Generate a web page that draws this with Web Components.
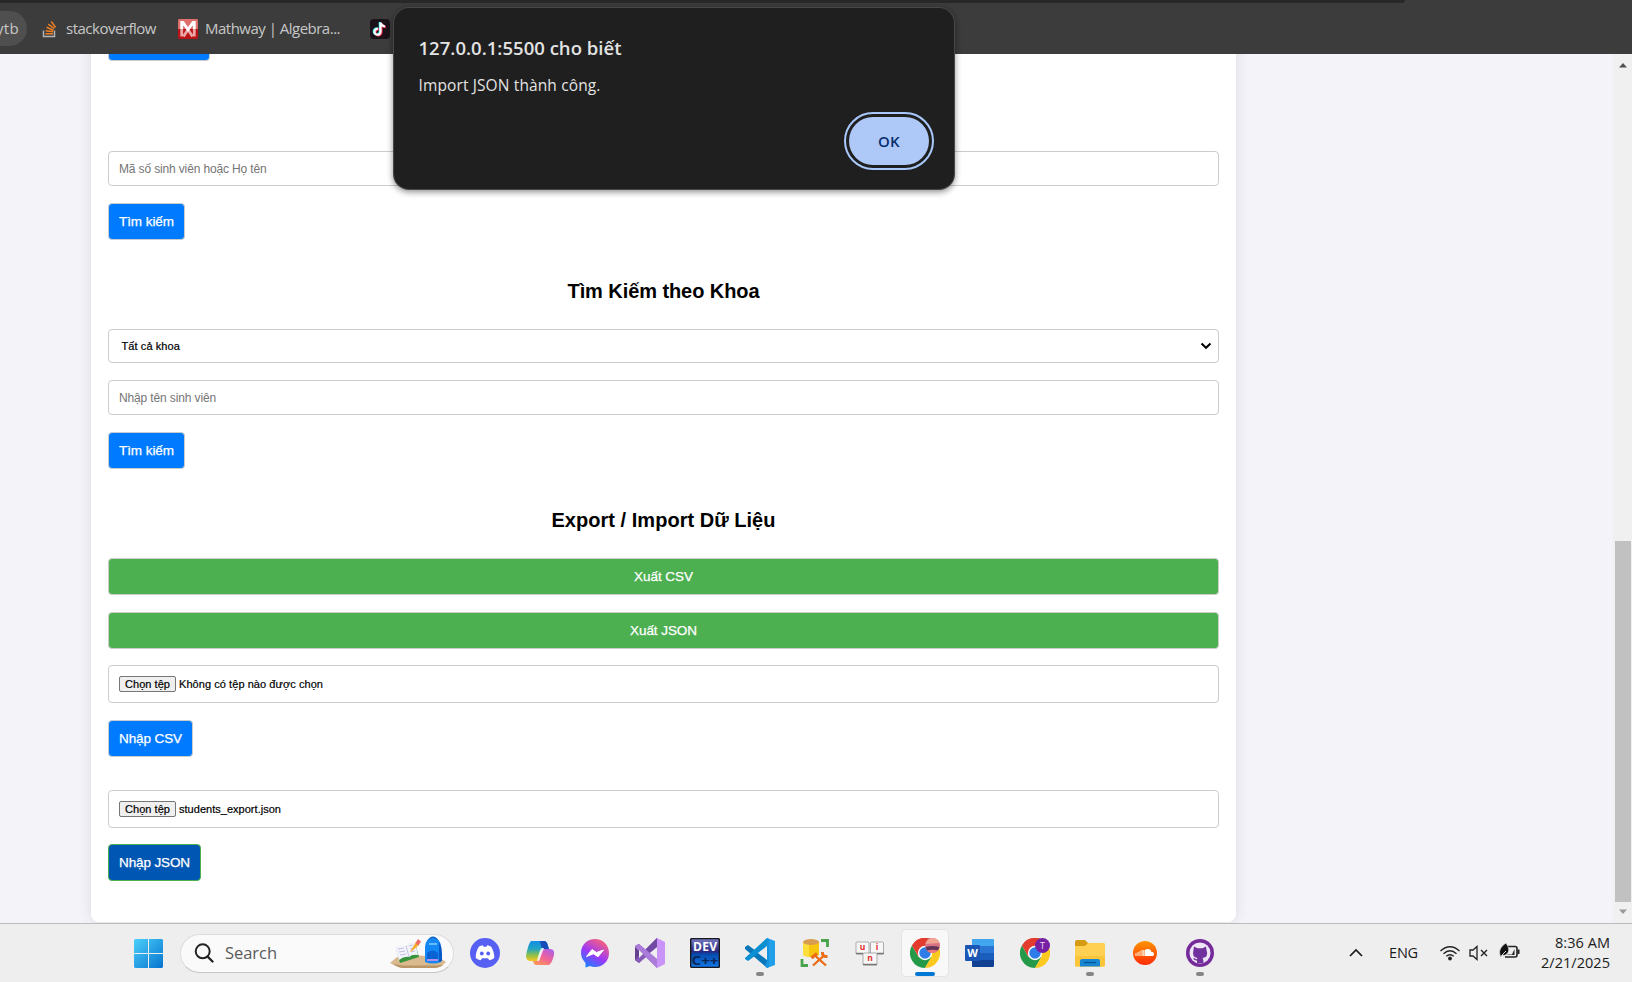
<!DOCTYPE html>
<html lang="vi">
<head>
<meta charset="utf-8">
<title>Quản lý sinh viên</title>
<style>
html,body{margin:0;height:100%;overflow:hidden}
body{font-family:"Liberation Sans",Arial,sans-serif}
</style>
</head>
<body>
<desktop-screen></desktop-screen>
<script>
const define = (name, html, after) => customElements.define(name, class extends HTMLElement {
  connectedCallback() {
    if (this.shadowRoot) return;
    this.attachShadow({mode: 'open'}).innerHTML = typeof html === 'function' ? html(this) : html;
    if (after) after(this);
  }
});

/* Text run whose tracking is adjusted to a given width */
define('fit-text', '<style>:host{display:inline-block;white-space:nowrap;text-align:left}span{display:inline-block}</style><span><slot></slot></span>', el => {
  const span = el.shadowRoot.querySelector('span'), w = +el.getAttribute('w');
  const n = el.textContent.length;
  const natural = span.getBoundingClientRect().width;
  span.style.letterSpacing = ((w - natural) / n) + 'px';
  el.style.width = w + 'px';
});

const chrome = `<path d="M15 15 2 7.5A15 15 0 0 1 28 7.5L15 8Z" fill="#e33b2e"/><path d="M2 7.5A15 15 0 0 0 15 30L21.5 19 15 15 8.5 19Z" fill="#249a49"/><path d="M28 7.5A15 15 0 0 1 15 30L21.5 18.7 15 8Z" fill="#fcc91f"/><path d="M2 7.5 8.5 18.8 15 8H28.2A15 15 0 0 0 2 7.5Z" fill="#e33b2e"/><circle cx="15" cy="15" r="7.2" fill="#fff"/><circle cx="15" cy="15" r="5.7" fill="#2f7de9"/>`;
const icons = {
  stack: ['0 0 16 18', `<path d="M1.5 10.5V16.500H12.500V10.500" fill="none" stroke="#b5b5b5" stroke-width="1.500"/><g stroke="#ee7f24" stroke-width="1.500"><path d="M3.500 13.700H11M3.700 10.700 11 11.800M4.600 7.300 11.500 10.200M6.300 4.200 12.200 8.500M9.300 1.500 13.600 7.500"/></g>`],
  mathway: ['0 0 20 20', `<rect width="20" height="20" rx="1.500" fill="#b91318"/><path d="M1 0H19L20 1V10H0V1Z" fill="#df6f6c"/><path d="M3.700 10V17.500M16.300 10V17.500M5.500 17.500 10 10.500 14.500 17.500" fill="none" stroke="#eba6a3" stroke-width="2.800"/><path d="M3.700 10V3.500H5L10 10.500 15 3.500H16.300V10" fill="none" stroke="#fff" stroke-width="2.800"/>`],
  tiktok: ['0 0 20 20', `<rect width="20" height="20" rx="4" fill="#1b1119"/><g fill="none" stroke-width="2.200"><path d="M10.500 3.500V13A3 3 0 1 1 8 9.800M10.500 4Q11.500 7 15 7.500" stroke="#25f4ee" transform="translate(-.7 -.4)"/><path d="M10.500 3.500V13A3 3 0 1 1 8 9.800M10.500 4Q11.500 7 15 7.500" stroke="#fe2c55" transform="translate(.9 .6)"/><path d="M10.500 3.500V13A3 3 0 1 1 8 9.800M10.500 4Q11.500 7 15 7.500" stroke="#fff"/></g>`],
  windows: ['0 0 29 29', `<defs><linearGradient id="g" x1="0" y1="0" x2="29" y2="29" gradientUnits="userSpaceOnUse"><stop stop-color="#4bd0fb"/><stop offset="1" stop-color="#0673ce"/></linearGradient></defs><path d="M1 0H14V14H0V1ZM15 0H28L29 1V14H15ZM0 15H14V29H1L0 28ZM15 15H29V28L28 29H15Z" fill="url(#g)"/>`],
  search: ['0 0 20 20', `<circle cx="8.700" cy="8.300" r="7" fill="none" stroke="#222" stroke-width="2"/><path d="M13.500 13.500 18.500 18.500" stroke="#222" stroke-width="2.300" stroke-linecap="round"/>`],
  books: ['0 0 58 34', `<path d="M1 27 8 21Q28 17 51 22L57 26Q53 31 46 32H13Q7 31 1 27Z" fill="#dab98f"/><path d="M4 28Q8 31 13 32H46Q52 31 54 29L46 29.500H14Z" fill="#b99568"/><path d="M7 13 26 7 30 21 11 27Z" fill="#38943c"/><path d="M6 11Q12 8 17 10 20 5 26 6L29 19Q23 18 20 21 15 20 10 24Z" fill="#f3f3fb"/><path d="M17 10 20 21M9 13 15 12M10 16 16 15M11 19 17 18M20 10 24 9M21 13 25 12M22 16 26 15" stroke="#b5b1dc" stroke-width=".8" fill="none"/><path d="M21 16 27 6 30 9 23 15Z" fill="#f8aa29"/><path d="M26.500 7 29 3 32 5.500 29.500 9.500Z" fill="#ef6a64"/><path d="M39 5Q44-2 49 5" fill="none" stroke="#1265c5" stroke-width="2"/><path d="M36 11Q36 3 44 2 52 3 52 11V26Q44 29 36 26Z" fill="#1388f4"/><path d="M50 6Q53 10 53 18V25L50 26Z" fill="#075ac5"/><path d="M38 17Q44 12 49 17V25H38Z" fill="#0963d5"/><path d="M38 23H49V25H38Z" fill="#b390f0"/><path d="M40 8H48" stroke="#66bdff" stroke-width="2"/>`],
  discord: ['0 0 30 30', `<circle cx="15" cy="15" r="15" fill="#5661f4"/><path d="M9 8.500Q11 7.500 12.800 7.300L13.600 8.700H16.400L17.200 7.300Q19 7.500 21 8.500 24.500 14 24.300 20 22 21.700 19.300 22.300L18 20.300H12L10.700 22.300Q8 21.700 5.700 20 5.500 14 9 8.500Z" fill="#fff"/><ellipse cx="11.800" cy="15.500" rx="1.900" ry="2.100" fill="#5661f4"/><ellipse cx="18.200" cy="15.500" rx="1.900" ry="2.100" fill="#5661f4"/>`],
  copilot: ['0 0 30 30', `<defs><linearGradient id="a" x2="0" y2="1"><stop stop-color="#118ee6"/><stop offset=".4" stop-color="#24a5c2"/><stop offset=".7" stop-color="#8cc14a"/><stop offset="1" stop-color="#f8c51d"/></linearGradient><linearGradient id="b" x1=".8" x2=".2" y2="1"><stop stop-color="#b05fe5"/><stop offset=".5" stop-color="#ee6299"/><stop offset="1" stop-color="#fb9858"/></linearGradient></defs><path d="M6 3H19Q22 3 23 8L24 11H19Q17 11 16 14L13 23H6Q1 23 1 18 3 6 6 3Z" fill="url(#a)"/><path d="M15 3H19Q22 3 23 8L24 11H18Q16 10 15 3Z" fill="#174bb8"/><path d="M24 11H25Q30 11 29 17 27 25 24 27H11Q9 27 8 23H11Q14 23 15 19L17 13Q18 11 20 11Z" fill="url(#b)"/><path d="M19 10H17Q15 10 12 23H14Z" fill="#fff" opacity=".8"/>`],
  messenger: ['0 0 30 30', `<defs><linearGradient id="m" x1=".2" y1="1" x2=".8" y2="0"><stop stop-color="#1384ff"/><stop offset=".45" stop-color="#9d38f7"/><stop offset="1" stop-color="#ff6671"/></linearGradient></defs><path d="M15 1C7 1 1 7 1 15 1 19 3 22 5.500 25V29.500L10 28Q12 29 15 29C23 29 29 23 29 15S23 1 15 1Z" fill="url(#m)"/><path d="M6.500 18.500 12 11.500 16.500 14.500 23.500 12 18 18.800 13.500 15.800Z" fill="#fff" stroke="#fff" stroke-width="1"/>`],
  vs: ['0 0 30 30', `<path d="M0 8 4 6 12 15 4 25 0 22Z" fill="#64408f"/><path d="M0 8 4 6 23 22 22 30 0 9Z" fill="#ae82dc"/><path d="M0 22 22 0V10L4 25Z" fill="#865bb8"/><path d="M4 11V20L9 15Z" fill="#eee"/><path d="M22 0 30 4V26L22 30V21L15 15 22 9Z" fill="#c993f7"/><path d="M22 9V21L15 15Z" fill="#eee"/><path d="M22 0V9L14 15 11 11Z" fill="#7149a5"/><path d="M0 8 4 6 22 21V30Z" fill="#aa7bd8"/>`],
  dev: ['0 0 30 30', `<defs><linearGradient id="d" x2="0" y2="1"><stop stop-color="#777bc0"/><stop offset=".45" stop-color="#292a82"/><stop offset=".55" stop-color="#064caf"/><stop offset="1" stop-color="#1277e8"/></linearGradient></defs><rect x=".6" y=".6" width="28.800" height="28.800" rx="1.500" fill="url(#d)" stroke="#17171d" stroke-width="1.500"/><text x="3" y="13" font-family="Open Sans" font-weight="700" font-size="12" textLength="24" fill="#fff">DEV</text><text x="1.500" y="26.500" font-family="Open Sans" font-weight="700" font-size="13" textLength="27" lengthAdjust="spacingAndGlyphs" fill="#092657">C++</text>`],
  vscode: ['0 0 30 30', `<path d="M0 9 3 7 23 22V30L21 29 0 11Z" fill="#0877b9"/><path d="M0 20 22 0V9L3 23 0 21Z" fill="#0b8fd3"/><path d="M22 0 30 3V27L22 30V22L13 15 22 8Z" fill="#229fe9"/><path d="M22 8V22L13 15Z" fill="#eee"/><path d="M22 0 24 1V29L22 30 20 28 22 22V8Z" fill="#1794df"/>`],
  db: ['0 0 30 30', `<path d="M3 4V17Q10 21 19 17V4Z" fill="#f7c60e"/><path d="M3 4V17Q6 19 9 19V4Z" fill="#ffdf3c"/><ellipse cx="11" cy="4" rx="8" ry="3" fill="#d89d50"/><path d="M21 2.500H27.500V9M2 21V27.500H8" fill="none" stroke="#49a34c" stroke-width="2.800"/><path d="M15.500 18 26 27.500M23.500 18 13 27.500" fill="none" stroke="#eb6a13" stroke-width="2.300"/><path d="M11.500 20 17 15.500M22.500 14Q22 19 27.500 18.500" fill="none" stroke="#eb6a13" stroke-width="3"/>`],
  unikey: ['0 0 30 30', `<g transform="translate(0 3)"><g fill="#f7f7f7" stroke="#999" stroke-width=".8"><rect x="1" y="1" width="13" height="12" rx="1"/><rect x="15.500" y="1" width="13" height="12" rx="1"/><rect x="8" y="12" width="14" height="12" rx="1"/></g><path d="M1 12.500H8M22 12.500H29M8 23.500H22" stroke="#777" stroke-width="1.600"/><g fill="#e62d2d" font-family="Open Sans" font-weight="700" font-size="8.500" text-anchor="middle"><text x="7.500" y="8.500">u</text><text x="22" y="8.500">i</text><text x="15" y="19.500">n</text></g></g>`],
  chrome1: ['0 0 30 30', chrome + `<circle cx="22.500" cy="7.500" r="7.500" fill="#da7384"/><path d="M15.500 6Q17 0 22.500 0T29.600 5Z" fill="#f0a492"/><path d="M15.500 9Q22 7 29.500 9L28 12.500H17Z" fill="#633656"/><path d="M17 13Q22 11 28 12.500 23 17 17 13Z" fill="#ef7981"/>`],
  word: ['0 0 30 30', `<rect x="7" y="1" width="22" height="28" rx="1.500" fill="#2a75d4"/><path d="M7 2Q7 1 9 1H28Q29 1 29 3V8H7Z" fill="#42a6ee"/><path d="M7 15H29V22H7Z" fill="#1a5dbd"/><path d="M7 22H29V27Q29 29 27 29H8Q7 29 7 27Z" fill="#113f91"/><rect y="7" width="15" height="16" rx="1" fill="#1b56b5"/><text x="7.500" y="19" text-anchor="middle" font-family="Open Sans" font-size="11" font-weight="700" fill="#fff">W</text>`],
  chrome2: ['0 0 30 30', chrome + `<circle cx="22.500" cy="7.500" r="7.500" fill="#7620a3"/><text x="22.500" y="11" text-anchor="middle" font-family="Open Sans" font-size="9" fill="#e8d7ef">T</text>`],
  explorer: ['0 0 30 30', `<path d="M0 4Q0 2 2 2H10L13 5H29V12H0Z" fill="#d49b13"/><path d="M0 8H10L13 5H29Q30 5 30 7V27Q30 28.500 28 28.500H2Q0 28.500 0 27Z" fill="#ffd052"/><path d="M0 18H30V27Q30 28.500 28 28.500H2Q0 28.500 0 27Z" fill="#fac43b"/><path d="M5 28.500V23Q5 21 7 21H23Q25 21 25 23V28.500Z" fill="#1686d3"/><path d="M9 24.500H21" stroke="#075390" stroke-width="1.200"/>`],
  soundcloud: ['0 0 30 30', `<defs><linearGradient id="s" x2="0" y2="1"><stop stop-color="#ff9500"/><stop offset="1" stop-color="#ff2b08"/></linearGradient></defs><circle cx="15" cy="15" r="12" fill="url(#s)"/><path d="M14.500 18V12Q20 9 21.500 14 24 13.500 24 16T22 18Z" fill="#fff"/><path d="M6 15V18M8 14V18M10 13V18M12 12V18M13.500 12V18" stroke="#ffd8b5" stroke-width="1.300"/>`],
  github: ['0 0 30 30', `<circle cx="15" cy="15" r="14" fill="#762b9a"/><circle cx="15" cy="15" r="10.500" fill="#eee6f5"/><path d="M9 8.500 12.500 10.200H17.500L21 8.500 21.500 12Q24 19 17.500 20 18.500 21 18.500 25H12V22.500Q9.500 23 8 20.500 10 19.800 11 21.300 12 21.500 12.500 20 6.500 19 8.500 12Z" fill="#71309d"/>`],
  chevron: ['0 0 16 10', `<path d="M2 8 8 2 14 8" fill="none" stroke="#1c1c1c" stroke-width="1.700"/>`],
  wifi: ['0 0 22 16', `<g fill="none" stroke="#222" stroke-width="1.400"><path d="M1.500 6Q11-2.500 20.500 6M4.500 8.700Q11 3 17.500 8.700M7.300 11.300Q11 8 14.700 11.300"/></g><circle cx="11" cy="13.500" r="1.900" fill="#222"/>`],
  mute: ['0 0 20 16', `<path d="M1 5H4L8 1.500V14.500L4 11H1Z" fill="none" stroke="#222" stroke-width="1.300"/><path d="M12 5 18 11M18 5 12 11" stroke="#222" stroke-width="1.400"/>`],
  battery: ['0 0 22 18', `<path d="M8 4.500H16Q18 4.500 18 6.500V13Q18 15 16 15H6" fill="none" stroke="#222" stroke-width="1.600"/><path d="M18.500 7.500H20.500V12H18.500Z" fill="#222"/><path d="M9 12.500H13L15.500 7V13H8Z" fill="#222"/><path d="M1 13Q-1 6 7 1 12 8 8 12 6 14 3 13L2 15.500Z" fill="#111" stroke="#eee" stroke-width=".6"/><path d="M2 16Q3 12 7 9" stroke="#eee" fill="none" stroke-width=".9"/>`]
};
define('app-icon', el => {
  const [box, body] = icons[el.getAttribute('name')];
  const [, , w, h] = box.split(' ');
  return `<style>:host{display:block;flex:none;width:${w}px;height:${h}px}svg{display:block}</style><svg width="${w}" height="${h}" viewBox="${box}">${body}</svg>`;
});

define('bookmark-bar', `<style>
:host{display:block;height:54px;background:#3c3c3c;color:#c7c7c7;font:15px/20px "Open Sans","Noto Sans",sans-serif;overflow:hidden}
.strip{height:3px;width:1405px;background:#282828;border-radius:0 0 4px 0}
.row{display:flex;align-items:center;height:51px}
.row fit-text{margin-top:-2px}
.pill{width:27px;height:35px;border-radius:0 18px 18px 0;background:#4f4f4f;display:flex;align-items:center;margin-right:15px}
.pill fit-text{margin-left:-4px}
</style><div class="strip"></div><div class="row">
<div class="pill"><fit-text w="23">ytb</fit-text></div>
<app-icon name="stack"></app-icon><fit-text w="90" style="margin-left:8px;margin-right:22px">stackoverflow</fit-text>
<app-icon name="mathway"></app-icon><fit-text w="135" style="margin-left:7px;margin-right:30px">Mathway | Algebra...</fit-text>
<app-icon name="tiktok"></app-icon></div>`);

define('form-button', `<style>
:host{display:flex;box-sizing:border-box;width:fit-content;height:37px;padding:0 10px;border:1px solid #ccc;border-radius:4px;background:#007bff;color:#fff;font-size:13.500px;line-height:35px;margin:0;justify-content:center;-webkit-text-stroke:.25px #fff}
:host([wide]){width:auto;background:#4caf50}
:host([pressed]){background:#0056b3;border-color:#4caf50}
</style><slot></slot>`);
define('text-field', `<style>
:host{display:flex;box-sizing:border-box;height:35px;padding:0 10px;border:1px solid #ccc;border-radius:4px;background:#fff;color:#757575;font-size:12px;align-items:center}
</style><slot></slot>`);
define('select-field', `<style>
:host{display:flex;box-sizing:border-box;height:34px;padding:0 6px 0 12.500px;border:1px solid #ccc;border-radius:4px;background:#fff;color:#000;font-size:11px;align-items:center;justify-content:space-between;-webkit-text-stroke:.2px #000}
</style><slot></slot><svg width="12" height="8" viewBox="0 0 12 8"><path d="M1.500 1.500 6 5.800 10.500 1.500" fill="none" stroke="#000" stroke-width="2"/></svg>`);
define('file-field', `<style>
:host{display:flex;box-sizing:border-box;height:38px;padding:0 10px;border:1px solid #ccc;border-radius:4px;background:#fff;color:#000;font-size:11px;align-items:center;gap:3px;-webkit-text-stroke:.2px #000}
.b{box-sizing:border-box;width:57px;height:16px;border:1px solid #767676;border-radius:2px;background:#efefef;padding-left:5px;line-height:14px}
</style><div class="b"><fit-text w="45">Chọn tệp</fit-text></div><slot></slot>`);
define('section-title', `<style>:host{display:flex;justify-content:center;font-weight:bold;font-size:20px;line-height:24px;color:#000}</style><slot></slot>`);

define('student-page', `<style>
:host{display:flex;height:869px;background:#f4f3f9;overflow:hidden;justify-content:space-between}
.card{box-sizing:border-box;width:1145px;height:968px;margin:-100px 0 0 91px;padding:70px 17px 0;border-radius:8px;background:#fff;box-shadow:0 0 13px rgba(0,0,0,.1)}
.card>*{margin-bottom:17px}
.scroll{width:19px;box-sizing:border-box;background:#f0f0f0;display:flex;flex-direction:column;align-items:center;padding:8px 0 8px 1px}
.thumb{width:16px;height:361px;background:#c1c1c1;margin:473px 0 auto}
</style>
<div class="card">
<form-button style="width:102px;margin-bottom:90px"></form-button>
<text-field><fit-text w="147.5">Mã số sinh viên hoặc Họ tên</fit-text></text-field>
<form-button style="margin-bottom:39px"><fit-text w="55">Tìm kiếm</fit-text></form-button>
<section-title style="margin-bottom:26px"><fit-text w="192">Tìm Kiếm theo Khoa</fit-text></section-title>
<select-field><fit-text w="58.5">Tất cả khoa</fit-text></select-field>
<text-field><fit-text w="97">Nhập tên sinh viên</fit-text></text-field>
<form-button style="margin-bottom:39px"><fit-text w="55">Tìm kiếm</fit-text></form-button>
<section-title style="margin-bottom:26px"><fit-text w="224">Export / Import Dữ Liệu</fit-text></section-title>
<form-button wide><fit-text w="59">Xuất CSV</fit-text></form-button>
<form-button wide style="margin-bottom:16px"><fit-text w="67">Xuất JSON</fit-text></form-button>
<file-field><fit-text w="144">Không có tệp nào được chọn</fit-text></file-field>
<form-button style="margin-bottom:33px"><fit-text w="63">Nhập CSV</fit-text></form-button>
<file-field style="margin-bottom:16px"><fit-text w="102">students_export.json</fit-text></file-field>
<form-button pressed><fit-text w="71">Nhập JSON</fit-text></form-button>
</div>
<div class="scroll"><svg width="10" height="6"><path d="M1 5.500 5 1 9 5.500Z" fill="#505050"/></svg><div class="thumb"></div><svg width="10" height="6"><path d="M1 .5 5 5 9 .5Z" fill="#999"/></svg></div>`);

define('alert-dialog', `<style>
:host{position:absolute;left:394px;top:8px;width:560px;height:181px;box-sizing:border-box;padding:25.500px 25px 0 24.500px;background:#1f1f1f;border-radius:15px;color:#e3e3e3;font-family:"Open Sans","Noto Sans",sans-serif;box-shadow:0 0 0 1px #484848,0 2px 6px 1px rgba(0,0,0,.45);display:flex;flex-direction:column}
.t{font-size:18.500px;font-weight:600;line-height:28px}
.m{font-size:15.500px;line-height:22px;margin-top:12px}
.ok{align-self:flex-end;margin:21px 0 0 0;box-sizing:border-box;width:80px;height:48px;border-radius:24px;background:#aec9f8;outline:2px solid #a8c7fa;outline-offset:3px;color:#062e6f;font-size:15px;font-weight:600;line-height:48px;display:flex;justify-content:center}
</style><div class="t"><fit-text w="203">127.0.0.1:5500 cho biết</fit-text></div><div class="m"><fit-text w="182">Import JSON thành công.</fit-text></div><div class="ok"><fit-text w="22">OK</fit-text></div>`);

define('task-app', el => `<style>
:host{display:flex;flex:none;width:55px;height:58px;align-items:center;justify-content:center}
.tile{box-sizing:border-box;width:48px;height:48px;display:flex;flex-direction:column;align-items:center;justify-content:space-between;padding-top:9px;border-radius:5px;border:1px solid transparent}
:host([active]) .tile{background:#f8f8f8;border-color:#e4e4e4}
app-icon{margin:-1px 0 auto}
i{display:none;width:8px;height:4px;border-radius:2px;background:#868686}
:host([running]) i,:host([active]) i{display:block}
:host([active]) i{width:20px;background:#0078d4}
</style><div class="tile"><app-icon name="${el.getAttribute('icon')}"></app-icon><i></i></div>`);

const apps = ['discord', 'copilot', 'messenger', 'vs', 'dev', 'vscode:running', 'db', 'unikey', 'chrome1:active', 'word', 'chrome2', 'explorer:running', 'soundcloud', 'github:running'];
define('task-bar', `<style>
:host{display:flex;box-sizing:border-box;height:59px;border-top:1px solid #bbb;background:#eee;align-items:center;padding:0 22px 0 134px;color:#1c1c1c;font:14.500px/20px "Open Sans","Noto Sans",sans-serif}
.search{box-sizing:border-box;width:274px;height:39px;margin:0 3px 0 17px;border:1px solid #dcdcdc;border-bottom-color:#c6c6c6;border-radius:20px;background:#fafafa;display:flex;align-items:center;padding:0 6px 0 13px;color:#5a5a5a;font-size:16.500px}
.search app-icon:last-child{margin-left:auto}
.search fit-text{margin-left:11px}
.tray{display:flex;align-items:center;margin-left:auto}
.clock{display:flex;flex-direction:column;align-items:flex-end;margin-left:20px}
.clock>*{height:20px}
</style>
<app-icon name="windows"></app-icon>
<div class="search"><app-icon name="search"></app-icon><fit-text w="52">Search</fit-text><app-icon name="books"></app-icon></div>
${apps.map(a => { const [n, s = ''] = a.split(':'); return `<task-app icon="${n}" ${s}></task-app>`; }).join('')}
<div class="tray"><app-icon name="chevron" style="margin-right:25px"></app-icon><fit-text w="29" style="margin-right:21px">ENG</fit-text>
<app-icon name="wifi" style="margin-right:8px"></app-icon><app-icon name="mute" style="margin-right:10px"></app-icon><app-icon name="battery" style="margin-top:-4px"></app-icon>
<div class="clock"><fit-text w="55">8:36 AM</fit-text><fit-text w="69">2/21/2025</fit-text></div></div>`);

define('desktop-screen', `<style>:host{display:flex;flex-direction:column;position:relative;width:1632px;height:982px;overflow:hidden}</style>
<bookmark-bar></bookmark-bar><student-page></student-page><task-bar></task-bar><alert-dialog></alert-dialog>`);
</script>
</body>
</html>
